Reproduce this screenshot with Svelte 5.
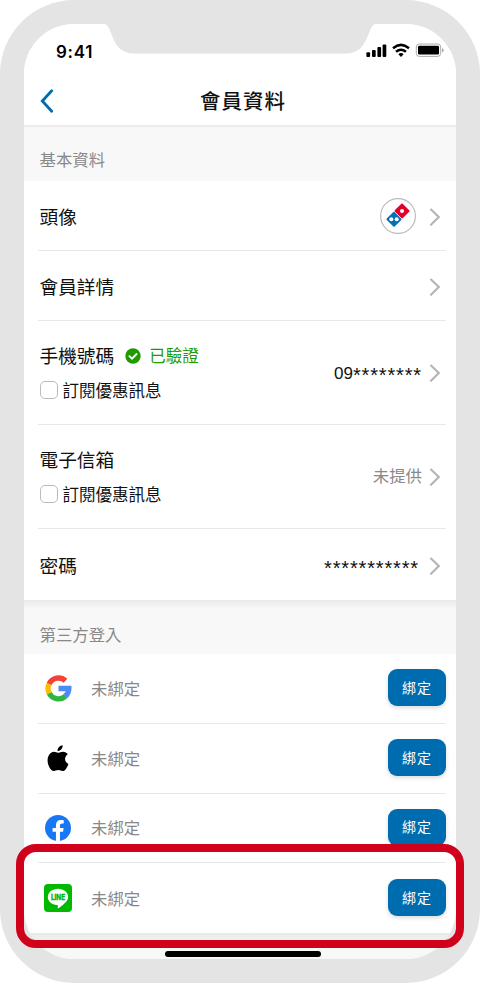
<script>
  let phoneSubscribed = false;
  let mailSubscribed = false;

  const accounts = ['google', 'apple', 'facebook', 'line'];
</script>

{#snippet chevron()}
  <svg class="chevron" width="12" height="20" viewBox="0 0 12 20">
    <path d="M2 2.5 9.8 10 2 17.7" fill="none" stroke="#b3b3b3" stroke-width="2.1" stroke-linecap="round" />
  </svg>
{/snippet}

<div class="phone">
  <div class="screen">
    <header>
      <div class="status">
        <span class="time">9:41</span>
        <svg width="78" height="16" viewBox="0 0 78 16">
          <rect x="0.4" y="9.2" width="3.7" height="4.8" rx="1" />
          <rect x="6" y="7" width="3.7" height="7" rx="1" />
          <rect x="11.4" y="4" width="3.7" height="10" rx="1" />
          <rect x="16.6" y="1.5" width="3.7" height="12.5" rx="1" />
          <g fill="none" stroke="#000" stroke-width="2.5">
            <path d="M27 5.2Q35 -1.4 43 5.2" />
            <path d="M30 8.8Q35 4.7 40 8.8" />
          </g>
          <path d="M32.4 11.2Q35 9 37.6 11.2L35 14Z" />
          <rect x="50.3" y="1" width="24.4" height="12.4" rx="3" fill="none" stroke="#aaa" />
          <rect x="52" y="2.8" width="21" height="8.8" rx="1.4" />
          <path d="M76 5v4.5q1.7-.7 1.7-2.2T76 5" fill="#aaa" />
        </svg>
      </div>
      <div class="title">
        <svg class="back" width="14" height="26" viewBox="0 0 14 26">
          <path d="M11.7 2.8 2.3 13 11.7 23.2" fill="none" stroke="#006cb0" stroke-width="2.8" stroke-linecap="round" />
        </svg>
        <h1>會員資料</h1>
      </div>
    </header>

    <h2 class="first">基本資料</h2>
    <section>
      <div class="row">
        <span class="label">頭像</span>
        <span class="avatar">
          <svg width="36" height="36" viewBox="0 0 36 36">
            <circle cx="18" cy="18" r="17.4" fill="#fff" stroke="#bdbdbd" stroke-width="1.2" />
            <rect x="-5.6" y="-5.6" width="11.2" height="11.2" rx="1" transform="translate(22 13) rotate(45)" fill="#e4002b" />
            <rect x="-5.6" y="-5.6" width="11.2" height="11.2" rx="1" transform="translate(14 21.3) rotate(45)" fill="#0072b5" />
            <path d="M14.2 13.3 22 21.1" stroke="#fff" stroke-width=".6" />
            <circle cx="22" cy="13" r="2" fill="#fff" />
            <circle cx="11.3" cy="21.3" r="2" fill="#fff" />
            <circle cx="16.7" cy="21.3" r="2" fill="#fff" />
          </svg>
        </span>
        {@render chevron()}
      </div>
      <div class="row">
        <span class="label">會員詳情</span>
        {@render chevron()}
      </div>
      <div class="row tall">
        <div class="field">
          <div class="name">
            <span class="label">手機號碼</span>
            <svg width="16" height="16" viewBox="0 0 16 16">
              <circle cx="8" cy="8" r="7.7" fill="#1d9b00" />
              <path d="M4.4 8.2 7 10.7 11.6 6" fill="none" stroke="#fff" stroke-width="1.8" stroke-linecap="round" />
            </svg>
            <span class="verified">已驗證</span>
          </div>
          <label><input type="checkbox" bind:checked={phoneSubscribed} />訂閱優惠訊息</label>
        </div>
        <span class="value">09<span class="stars">********</span></span>
        {@render chevron()}
      </div>
      <div class="row tall">
        <div class="field">
          <div class="name"><span class="label">電子信箱</span></div>
          <label><input type="checkbox" bind:checked={mailSubscribed} />訂閱優惠訊息</label>
        </div>
        <span class="value empty">未提供</span>
        {@render chevron()}
      </div>
      <div class="row password">
        <span class="label">密碼</span>
        <span class="value"><span class="stars">***********</span></span>
        {@render chevron()}
      </div>
    </section>

    <h2 class="second">第三方登入</h2>
    <section class="accounts">
      {#each accounts as account}
        <div class="row account">
          <span class="logo">
            {#if account === 'google'}
              <svg width="27" height="27" viewBox="0 0 48 48">
                <g fill="none" stroke-width="9.5">
                  <path stroke="#4c8bf5" d="M24 24H42.3A18.5 18.5 0 0 1 35.5 38.3" />
                  <path stroke="#2db742" d="M36 38A18.5 18.5 0 0 1 7.4 32.2" />
                  <path stroke="#fbbc05" d="M7.6 32.6A18.5 18.5 0 0 1 7.6 15.4" />
                  <path stroke="#f44336" d="M7.4 15.800A18.5 18.5 0 0 1 36.5 10.300" />
                </g>
              </svg>
            {:else if account === 'apple'}
              <svg width="22" height="27" viewBox="0 0 22 27">
                <path d="M15.6.3c.3 3-2.2 5.9-5 5.8C10.2 3.3 12.9.5 15.6.3zM11 7.8c1.5 0 2.8-1.1 5.1-1.1 2 0 3.7.9 4.7 2.500-4 2.600-3.500 7.900.6 9.700-1 3-3.200 7.100-5.600 7.100-1.800 0-2.500-1-4.600-1s-2.800 1-4.500 1C3.800 26 .7 20.500.6 15.700.5 10.600 3.600 6.800 6.900 6.800c1.700 0 2.900 1 4.100 1z" />
              </svg>
            {:else if account === 'facebook'}
              <svg width="26" height="26" viewBox="0 0 24 24">
                <circle cx="12" cy="12" r="12" fill="#1877f2" />
                <path fill="#fff" d="M10.100 24v-8.500H7V12h3.100V9.400c0-3 1.800-4.700 4.500-4.700 1.300 0 2.700.2 2.700.2v3h-1.500c-1.500 0-2 .9-2 1.900V12h3.400l-.5 3.500h-2.900V24z" />
              </svg>
            {:else}
              <svg width="28" height="28" viewBox="0 0 28 28">
                <rect width="28" height="28" rx="4" fill="#00b900" />
                <path fill="#fff" d="M14 4.800c5.600 0 10.200 3.600 10.200 8.100 0 3.900-5.100 8-9.200 11-1 .7-1.500.5-1.200-.8.300-1.400.200-2-.8-2.100C7.600 20.400 3.800 17.100 3.800 12.900c0-4.500 4.600-8.100 10.200-8.100z" />
                <text x="14" y="15.800" text-anchor="middle" textLength="14" lengthAdjust="spacingAndGlyphs">LINE</text>
              </svg>
            {/if}
          </span>
          <span class="unbound">未綁定</span>
          <button>綁定</button>
        </div>
      {/each}
    </section>
    <footer><div class="home"></div></footer>
  </div>

  <svg class="notch" width="276" height="32" viewBox="0 0 276 32">
    <path d="M0 0H2C11 0 8 29.5 32 29.5H244C268 29.5 265 0 274 0H276Z" fill="#e4e4e4" />
  </svg>
  <div class="highlight"></div>
</div>

<style>
  :global(body) {
    background: #fff;
  }

  .phone {
    position: relative;
    box-sizing: border-box;
    width: 480px;
    height: 983px;
    padding: 24px;
    border-radius: 74px;
    background: #e4e4e4;
    font-family: "Noto Sans CJK TC", sans-serif;
    color: #111;
  }

  .screen {
    display: flex;
    flex-direction: column;
    height: 935px;
    border-radius: 50px;
    overflow: hidden;
    background: #f8f8f8;
  }

  header {
    box-sizing: border-box;
    flex: none;
    height: 103px;
    background: #fff;
    border-bottom: 2px solid #ececec;
  }

  .status {
    display: flex;
    justify-content: space-between;
    align-items: center;
    height: 52px;
    padding: 3px 12px 0 32px;
    box-sizing: border-box;
  }

  .status svg {
    margin-top: -1px;
  }

  .time {
    font-family: Inter, sans-serif;
    font-size: 17px;
    font-weight: 600;
    letter-spacing: 0.7px;
    color: #000;
  }

  .title {
    display: flex;
    align-items: center;
    height: 50px;
    padding-left: 16px;
  }

  h1 {
    flex: 1;
    margin: -2px 24px 0 0;
    text-align: center;
    font-size: 20.5px;
    font-weight: 500;
    letter-spacing: 1px;
  }

  h2 {
    box-sizing: border-box;
    flex: none;
    margin: 0;
    padding-left: 15.5px;
    font-size: 16.4px;
    font-weight: 400;
    color: #888;
  }

  .first {
    height: 54px;
    line-height: 65px;
  }

  .second {
    height: 54px;
    line-height: 68px;
    background: linear-gradient(#e9e9e9, #f8f8f8 9px);
  }

  section {
    flex: none;
    background: #fff;
    padding: 0 10px 0 14px;
  }

  .row {
    display: flex;
    align-items: center;
    box-sizing: border-box;
    height: 70px;
    padding: 2px 5px 0 1.5px;
    border-bottom: 1.5px solid #e8e8e8;
  }

  .row:last-child {
    border-bottom: 0;
  }

  .tall {
    height: 104px;
    padding-top: 0;
  }

  .password {
    height: 71px;
  }

  .label {
    margin-top: -2px;
    font-size: 18.7px;
    line-height: 26px;
  }

  .chevron {
    flex: none;
    margin-left: 7px;
  }

  .row > .chevron:nth-child(2) {
    margin-left: auto;
  }

  .avatar {
    margin: -2px 6px 0 auto;
    height: 36px;
  }

  .name {
    display: flex;
    align-items: center;
    height: 34px;
  }

  .name svg {
    margin: 0 8px 0 11px;
  }

  .verified {
    margin-top: -1px;
    color: #1d9b00;
    font-size: 16.5px;
  }

  label {
    display: flex;
    align-items: center;
    height: 34px;
    font-size: 16.5px;
  }

  input {
    appearance: none;
    width: 18px;
    height: 18px;
    margin: 0 5px 0 0;
    border: 1.5px solid #bbb;
    border-radius: 5px;
  }

  .value {
    margin-left: auto;
    margin-top: -1px;
    font-family: "Liberation Sans", "Noto Sans CJK TC", sans-serif;
    font-size: 17px;
  }

  .stars {
    position: relative;
    top: 3px;
    font-size: 20px;
    letter-spacing: 0.85px;
  }

  .password .value {
    margin-right: 3px;
  }

  .value.empty,
  .unbound {
    font-size: 16.4px;
    color: #888;
  }

  .value.empty {
    margin-top: -3px;
  }

  .account {
    height: 69.75px;
    padding: 0 0 0 2px;
  }

  .logo {
    display: flex;
    justify-content: center;
    width: 36px;
  }

  .unbound {
    margin-left: 15px;
    margin-top: -1px;
  }

  button {
    margin: -1px 0 0 auto;
    width: 58px;
    height: 37px;
    padding: 0 0 2px;
    border: 0;
    border-radius: 9px;
    background: #006cb0;
    box-shadow: 0 2px 4px rgba(0, 0, 0, 0.14);
    color: #fff;
    font-family: "Noto Sans CJK TC", sans-serif;
    font-size: 14px;
    letter-spacing: 1px;
  }

  .logo text {
    fill: #00b900;
    stroke: #00b900;
    stroke-width: 0.3px;
    font: 800 7px Inter, sans-serif;
  }

  footer {
    flex: 1;
    display: flex;
    align-items: flex-end;
    padding: 0 0 2px 141px;
    background: linear-gradient(#e9e9e9, #f8f8f8 12px);
  }

  .home {
    width: 156px;
    height: 6px;
    border-radius: 3px;
    background: #000;
  }

  .notch {
    position: absolute;
    top: 24px;
    left: 102px;
  }

  .highlight {
    position: absolute;
    box-sizing: border-box;
    top: 844px;
    left: 16px;
    width: 448px;
    height: 104px;
    border: 8px solid #d0021b;
    border-radius: 20px;
  }
</style>
